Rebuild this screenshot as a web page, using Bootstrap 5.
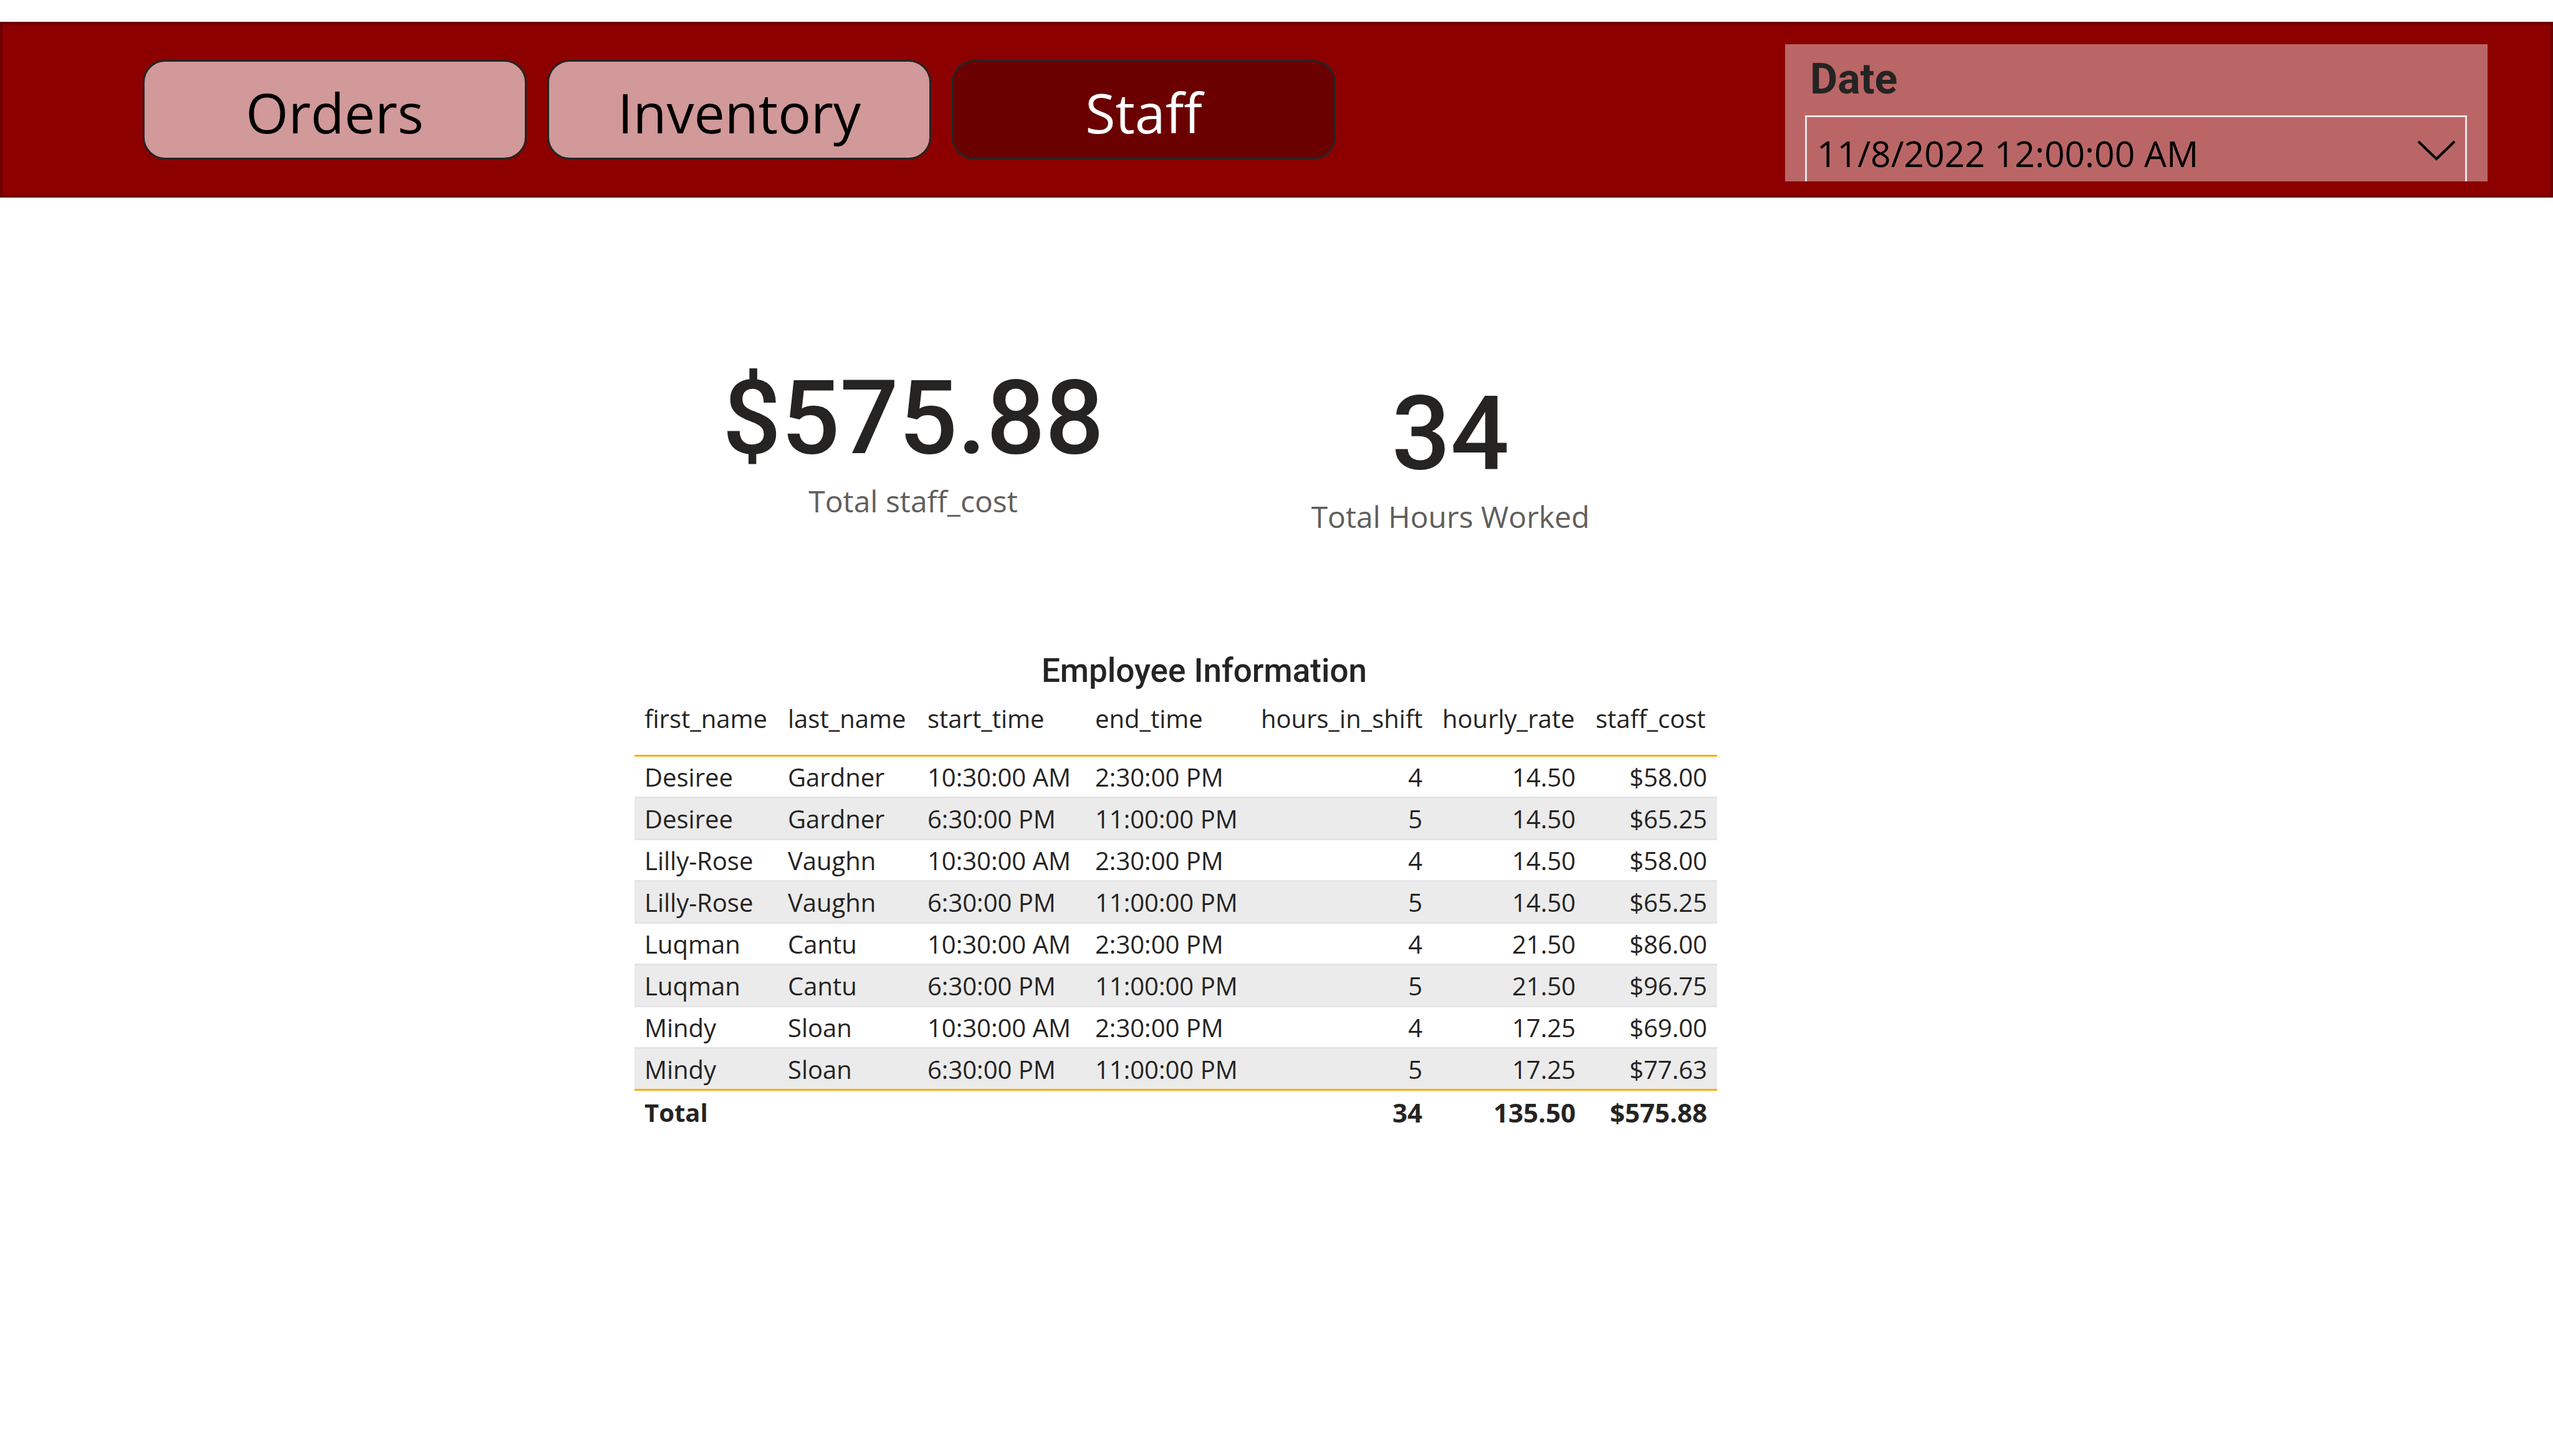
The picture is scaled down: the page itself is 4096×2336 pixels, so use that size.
<!DOCTYPE html>
<html lang="en">
<head>
<meta charset="utf-8">
<meta name="viewport" content="width=device-width, initial-scale=1">
<title>Staff</title>
<link rel="stylesheet" href="https://cdn.jsdelivr.net/npm/bootstrap@5.3.0/dist/css/bootstrap.min.css">
<style>
  body {
    font-family: "Open Sans", "Noto Sans", sans-serif;
    color: #252423;
    background: #fff;
    padding-top: 35px;
  }
  .din { font-family: Roboto, "Open Sans", sans-serif; }

  /* header bar */
  .topbar {
    background: #8c0000;
    border: 4px solid #6b0000;
    padding: 0 101px 0 225px;
  }
  .page-tabs { gap: 33px; padding: 57px 0; }
  .page-tabs .btn {
    width: 616px;
    height: 160px;
    padding: 8px 0 0;
    border: 3px solid #252423;
    border-radius: 36px;
    background: #d19999;
    color: #000;
    font-size: 88px;
    line-height: 120px;
  }
  .page-tabs .btn.active { background: #6b0000; color: #fff; border-color: #252423; }

  /* date slicer: the drop-down runs past the panel's lower edge */
  .slicer {
    width: 1127px;
    height: 220px;
    margin-top: 32px;
    padding: 16px 33px 0 32px;
    background: #ba6666;
  }
  .slicer label {
    display: block;
    padding-left: 8px;
    font-size: 68px;
    font-weight: 700;
    line-height: 80px;
    margin-bottom: 18px;
  }
  .slicer .form-select {
    height: 140px;
    padding: 0 100px 18px 16px;
    border: 3px solid #e6e6e6;
    border-radius: 0;
    background: transparent;
    color: #000;
    font-size: 57px;
    line-height: 80px;
  }
  .slicer .chevron { right: 18px; top: 40px; width: 62px; height: 34px; pointer-events: none; }

  /* report body */
  .report { display: grid; grid-template-columns: 1018fr 1737fr 1341fr; padding-top: 271px; }
  .report-body { grid-column: 2; }
  .kpis { display: grid; grid-template-columns: 894fr 830fr; padding-right: 13px; }
  .kpi-value { font-size: 166px; font-weight: 500; line-height: 166px; margin-bottom: 18px; }
  .kpi-label { font-size: 48px; line-height: 64px; color: #605e5c; }
  .kpi-low { padding-top: 25px; }
  .table-title {
    margin: 185px 0 0;
    padding-left: 91px;
    font-size: 53px;
    font-weight: 500;
    line-height: 60px;
  }

  .staff-table { border-collapse: separate; border-spacing: 0; table-layout: fixed; width: 100%; font-size: 40px; line-height: 62px; }
  .staff-table th, .staff-table td { padding: 2px 16px 0; border: 0 solid #e4e4e4; white-space: nowrap; }
  .staff-table thead th { padding: 17px 16px 28px; line-height: 60px; font-weight: 400; border-bottom: 3px solid #ffab00; }
  .staff-table thead th.text-end { padding-right: 20px; }
  .staff-table tbody td { border-bottom-width: 3px; }
  .staff-table tbody tr:nth-child(even) td { background: #ebebeb; }
  .staff-table tbody tr:last-child td { border-bottom-color: #ffab00; }
  .staff-table tfoot td { padding-top: 4px; font-weight: 700; }
  .staff-table tfoot .text-end { font-size: 42px; }
  .c-first { width: 230px; } .c-last { width: 224px; } .c-start { width: 269px; } .c-end { width: 266px; }
  .c-hours { width: 291px; } .c-rate { width: 246px; } .c-cost { width: 211px; }
</style>
</head>
<body>
<header class="topbar d-flex justify-content-between align-items-start">
  <nav class="page-tabs d-flex" aria-label="Report pages">
    <button type="button" class="btn">Orders</button>
    <button type="button" class="btn">Inventory</button>
    <button type="button" class="btn active" aria-current="page">Staff</button>
  </nav>
  <div class="slicer overflow-hidden">
    <label class="din" for="date">Date</label>
    <div class="position-relative">
      <select id="date" class="form-select"><option>11/8/2022 12:00:00 AM</option></select>
      <svg class="chevron position-absolute" viewBox="0 0 62 34" fill="none" stroke="#000" stroke-width="4" aria-hidden="true"><path d="M2 2 31 30 60 2"/></svg>
    </div>
  </div>
</header>

<main class="report">
  <div class="report-body">
    <section class="kpis text-center">
      <div>
        <div class="kpi-value din">$575.88</div>
        <div class="kpi-label">Total staff_cost</div>
      </div>
      <div class="kpi-low">
        <div class="kpi-value din">34</div>
        <div class="kpi-label">Total Hours Worked</div>
      </div>
    </section>

    <h2 class="table-title din text-center" id="emp-title">Employee Information</h2>
    <table class="staff-table" aria-labelledby="emp-title">
      <colgroup>
        <col class="c-first"><col class="c-last"><col class="c-start"><col class="c-end"><col class="c-hours"><col class="c-rate"><col class="c-cost">
      </colgroup>
      <thead>
        <tr>
          <th scope="col">first_name</th><th scope="col">last_name</th><th scope="col">start_time</th><th scope="col">end_time</th>
          <th scope="col" class="text-end">hours_in_shift</th><th scope="col" class="text-end">hourly_rate</th><th scope="col" class="text-end">staff_cost</th>
        </tr>
      </thead>
      <tbody>
        <tr><td>Desiree</td><td>Gardner</td><td>10:30:00 AM</td><td>2:30:00 PM</td><td class="text-end">4</td><td class="text-end">14.50</td><td class="text-end">$58.00</td></tr>
        <tr><td>Desiree</td><td>Gardner</td><td>6:30:00 PM</td><td>11:00:00 PM</td><td class="text-end">5</td><td class="text-end">14.50</td><td class="text-end">$65.25</td></tr>
        <tr><td>Lilly-Rose</td><td>Vaughn</td><td>10:30:00 AM</td><td>2:30:00 PM</td><td class="text-end">4</td><td class="text-end">14.50</td><td class="text-end">$58.00</td></tr>
        <tr><td>Lilly-Rose</td><td>Vaughn</td><td>6:30:00 PM</td><td>11:00:00 PM</td><td class="text-end">5</td><td class="text-end">14.50</td><td class="text-end">$65.25</td></tr>
        <tr><td>Luqman</td><td>Cantu</td><td>10:30:00 AM</td><td>2:30:00 PM</td><td class="text-end">4</td><td class="text-end">21.50</td><td class="text-end">$86.00</td></tr>
        <tr><td>Luqman</td><td>Cantu</td><td>6:30:00 PM</td><td>11:00:00 PM</td><td class="text-end">5</td><td class="text-end">21.50</td><td class="text-end">$96.75</td></tr>
        <tr><td>Mindy</td><td>Sloan</td><td>10:30:00 AM</td><td>2:30:00 PM</td><td class="text-end">4</td><td class="text-end">17.25</td><td class="text-end">$69.00</td></tr>
        <tr><td>Mindy</td><td>Sloan</td><td>6:30:00 PM</td><td>11:00:00 PM</td><td class="text-end">5</td><td class="text-end">17.25</td><td class="text-end">$77.63</td></tr>
      </tbody>
      <tfoot>
        <tr><td>Total</td><td></td><td></td><td></td><td class="text-end">34</td><td class="text-end">135.50</td><td class="text-end">$575.88</td></tr>
      </tfoot>
    </table>
  </div>
</main>
<script src="https://cdn.jsdelivr.net/npm/bootstrap@5.3.0/dist/js/bootstrap.bundle.min.js"></script>
</body>
</html>
